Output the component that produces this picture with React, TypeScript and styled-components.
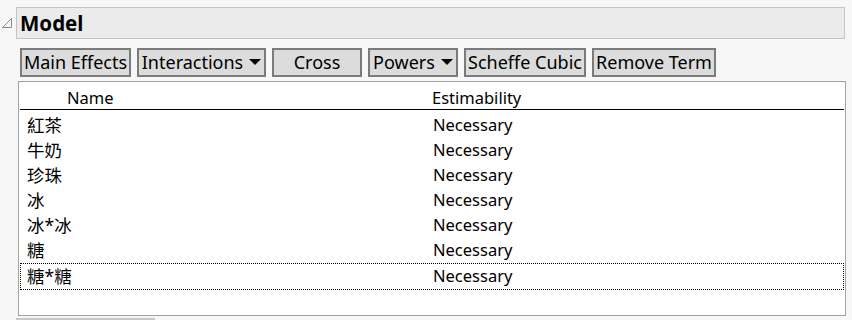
import styled, { createGlobalStyle } from 'styled-components';

interface ColProps {
    pl?: number;
    cjk?: boolean;
}

interface RowProps {
    focused?: boolean;
}

const terms = ['紅茶', '牛奶', '珍珠', '冰', '冰*冰', '糖', '糖*糖'];

const buttons = [
    { label: 'Main Effects', w: 111 },
    { label: 'Interactions', w: 129, menu: true },
    { label: 'Cross', w: 90 },
    { label: 'Powers', w: 90, menu: true },
    { label: 'Scheffe Cubic', w: 122 },
    { label: 'Remove Term', w: 124 },
];

function App() {
    return (
        <>
            <GlobalStyle />
            <Page>
                <TitleRow>
                    <Toggle>
                        <svg width='12' height='12' viewBox='0 0 12 12'>
                            <path d='M10.5 1.5 L10.5 10.5 L1.5 10.5 Z' fill='none' stroke='#8a8a8a' strokeWidth='1' />
                        </svg>
                    </Toggle>
                    <TitleBar>Model</TitleBar>
                </TitleRow>

                <Body>
                    <ButtonRow>
                        {buttons.map((b) => (
                            <Button key={b.label} w={b.w}>
                                {b.label}
                                {b.menu && <Caret />}
                            </Button>
                        ))}
                    </ButtonRow>

                    <TablePanel>
                        <HeadRow>
                            <NameCol pl={47}>Name</NameCol>
                            <EstCol>Estimability</EstCol>
                        </HeadRow>
                        <Rows>
                            {terms.map((t, i) => (
                                <Row key={t} focused={i === terms.length - 1}>
                                    <NameCol pl={6} cjk>
                                        {t}
                                    </NameCol>
                                    <EstCol>Necessary</EstCol>
                                </Row>
                            ))}
                        </Rows>
                    </TablePanel>
                </Body>
                <Scroll />
            </Page>
        </>
    );
}

export default App;

const GlobalStyle = createGlobalStyle`
    body {
        margin: 0;
        background: #f7f7f7;
        font-family: 'Noto Sans', 'Noto Sans CJK TC', sans-serif;
        color: #000;
    }
`;

const Page = styled.div`
    width: 852px;
    height: 320px;
    padding-top: 7px;
    box-sizing: border-box;
    overflow: hidden;
`;

const TitleRow = styled.div`
    display: flex;
    align-items: center;
`;

const Toggle = styled.div`
    width: 16px;
    height: 32px;
    display: flex;
    align-items: center;
    padding-left: 1px;
    box-sizing: border-box;
`;

const TitleBar = styled.div`
    width: 829px;
    height: 32px;
    box-sizing: border-box;
    border: 1px solid #c4c4c4;
    background: #ebebeb;
    font-size: 20.5px;
    font-weight: bold;
    padding-left: 3px;
    display: flex;
    align-items: center;
`;

const Body = styled.div`
    padding-left: 18px;
`;

const ButtonRow = styled.div`
    display: flex;
    gap: 6px;
    margin-top: 9px;
    padding-left: 2px;
`;

const Button = styled.button<{ w: number }>`
    width: ${(props) => props.w}px;
    height: 29px;
    box-sizing: border-box;
    border: 2px solid #7b7b7b;
    background: #dcdcdc;
    font-family: 'Noto Sans', sans-serif;
    font-size: 18px;
    color: #000;
    padding: 0 0 1px;
    display: flex;
    align-items: center;
    justify-content: center;
    gap: 6px;
    white-space: nowrap;
`;

const Caret = styled.span`
    width: 0;
    height: 0;
    border-left: 6px solid transparent;
    border-right: 6px solid transparent;
    border-top: 6px solid #000;
`;

const TablePanel = styled.div`
    margin-top: 4px;
    width: 828px;
    height: 235px;
    box-sizing: border-box;
    border: 1px solid #a3a3a3;
    background: #fff;
    padding: 0 1px;
`;

const HeadRow = styled.div`
    display: flex;
    align-items: center;
    height: 28px;
    padding-top: 4px;
    box-sizing: border-box;
    border-bottom: 1px solid #000;
    font-size: 16.5px;
`;

const Rows = styled.div`
    padding-top: 3px;
`;

const Row = styled.div<RowProps>`
    display: flex;
    align-items: center;
    height: ${(props) => (props.focused ? 27 : 25)}px;
    padding-bottom: 2px;
    box-sizing: border-box;
    border: 1px dotted ${(props) => (props.focused ? '#000' : 'transparent')};
    font-size: 16.5px;
`;

const NameCol = styled.div<ColProps>`
    width: 412px;
    padding-left: ${(props) => props.pl}px;
    box-sizing: border-box;
    font-size: ${(props) => (props.cjk ? '17.5px' : 'inherit')};
`;

const EstCol = styled.div`
    flex: 1;
`;

const Scroll = styled.div`
    margin-top: 2px;
    margin-left: 16px;
    width: 139px;
    height: 3px;
    background: #c8c8c8;
`;
